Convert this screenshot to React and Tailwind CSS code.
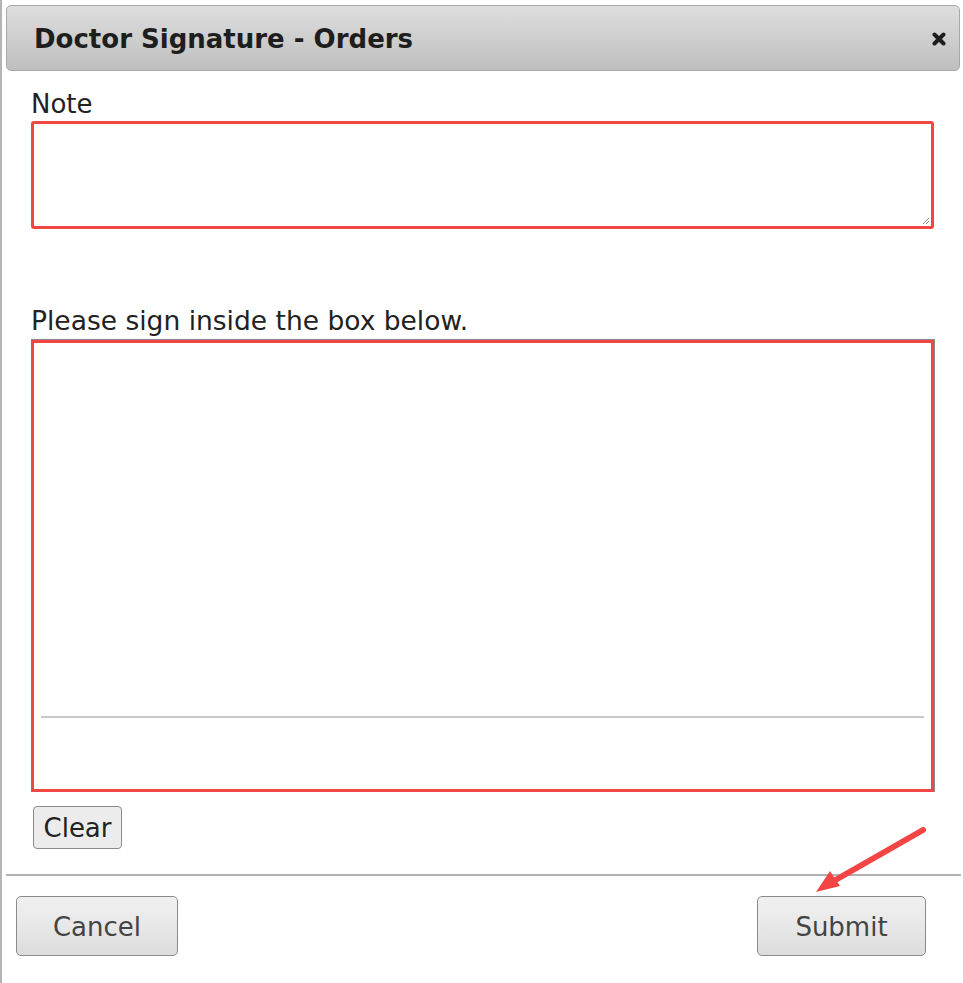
import React from 'react';

/**
 * Diálogo de assinatura do médico para pedidos.
 */
export default function App() {
  return (
    <div className="relative w-[963px] h-[983px] bg-white font-['DejaVu_Sans',Verdana,sans-serif] text-[#222]">
      <div className="h-full border-l-2 border-[#b4b4b4] pt-[5px]">
        {/* Cabeçalho */}
        <div className="ml-[4px] mr-[3px] h-[66px] flex items-center justify-between pl-[27px] pr-[13px] pt-[2px] rounded-[5px] border border-[#a8a8a8] bg-gradient-to-b from-[#dedede] to-[#bfbfbf]">
          <span className="text-[26px] leading-[30px] font-bold text-[#1e1e1e]">Doctor Signature - Orders</span>
          <svg width="14" height="14" viewBox="0 0 14 14">
            <path d="M2.5 2.5 L11.5 11.5 M11.5 2.5 L2.5 11.5" stroke="#1e1e1e" strokeWidth="4" strokeLinecap="round" />
          </svg>
        </div>

        {/* Corpo */}
        <div className="pl-[29px] pr-[26px]">
          <div className="mt-[18px] text-[26px] leading-[30px]">Note</div>
          <div className="relative mt-[2px] h-[108px] w-[903px] rounded-[3px] border-[3px] border-[#f44545]">
            <svg width="8" height="8" viewBox="0 0 8 8" className="absolute right-[1px] bottom-[1px]">
              <path d="M1 7 L7 1 M4 7 L7 4" stroke="#888" strokeWidth="1" />
            </svg>
          </div>

          <div className="mt-[77px] text-[26.5px] leading-[30px]">Please sign inside the box below.</div>
          <div className="mt-[3px] w-[904px] h-[453px] border-t border-r border-[#8a8a8a]">
            <div className="h-full border-[3px] border-[#f44545] flex flex-col justify-end pb-[71px] px-[7px]">
              <div className="h-[2px] bg-[#c8c8c8]" />
            </div>
          </div>

          <button className="mt-[14px] ml-[2px] h-[43px] w-[89px] rounded-[4px] border border-[#8a8a8a] bg-[#ececec] text-[26px] leading-[30px] text-[#222]">
            Clear
          </button>
        </div>

        {/* Rodapé */}
        <div className="mt-[25px] ml-[4px] w-[955px] h-[2px] bg-[#b0b0b0]" />
        <div className="flex justify-between pl-[14px] pr-[37px] mt-[20px]">
          <button className="h-[60px] w-[162px] pt-[3px] rounded-[5px] border border-[#8a8a8a] bg-gradient-to-b from-[#f0f0f0] via-[#e8e8e8] to-[#dcdcdc] text-[26px] text-[#444]">
            Cancel
          </button>
          <button className="h-[60px] w-[169px] pt-[3px] rounded-[5px] border border-[#8a8a8a] bg-gradient-to-b from-[#f0f0f0] via-[#e8e8e8] to-[#dcdcdc] text-[26px] text-[#444]">
            Submit
          </button>
        </div>
      </div>

      {/* Seta de anotação */}
      <svg width="130" height="80" viewBox="0 0 130 80" className="absolute left-[810px] top-[822px]">
        <path d="M113 8 L22 60" stroke="#f44545" strokeWidth="6" strokeLinecap="round" />
        <path d="M6 70 L20 49 L30 64 Z" fill="#f44545" />
      </svg>
    </div>
  );
}
